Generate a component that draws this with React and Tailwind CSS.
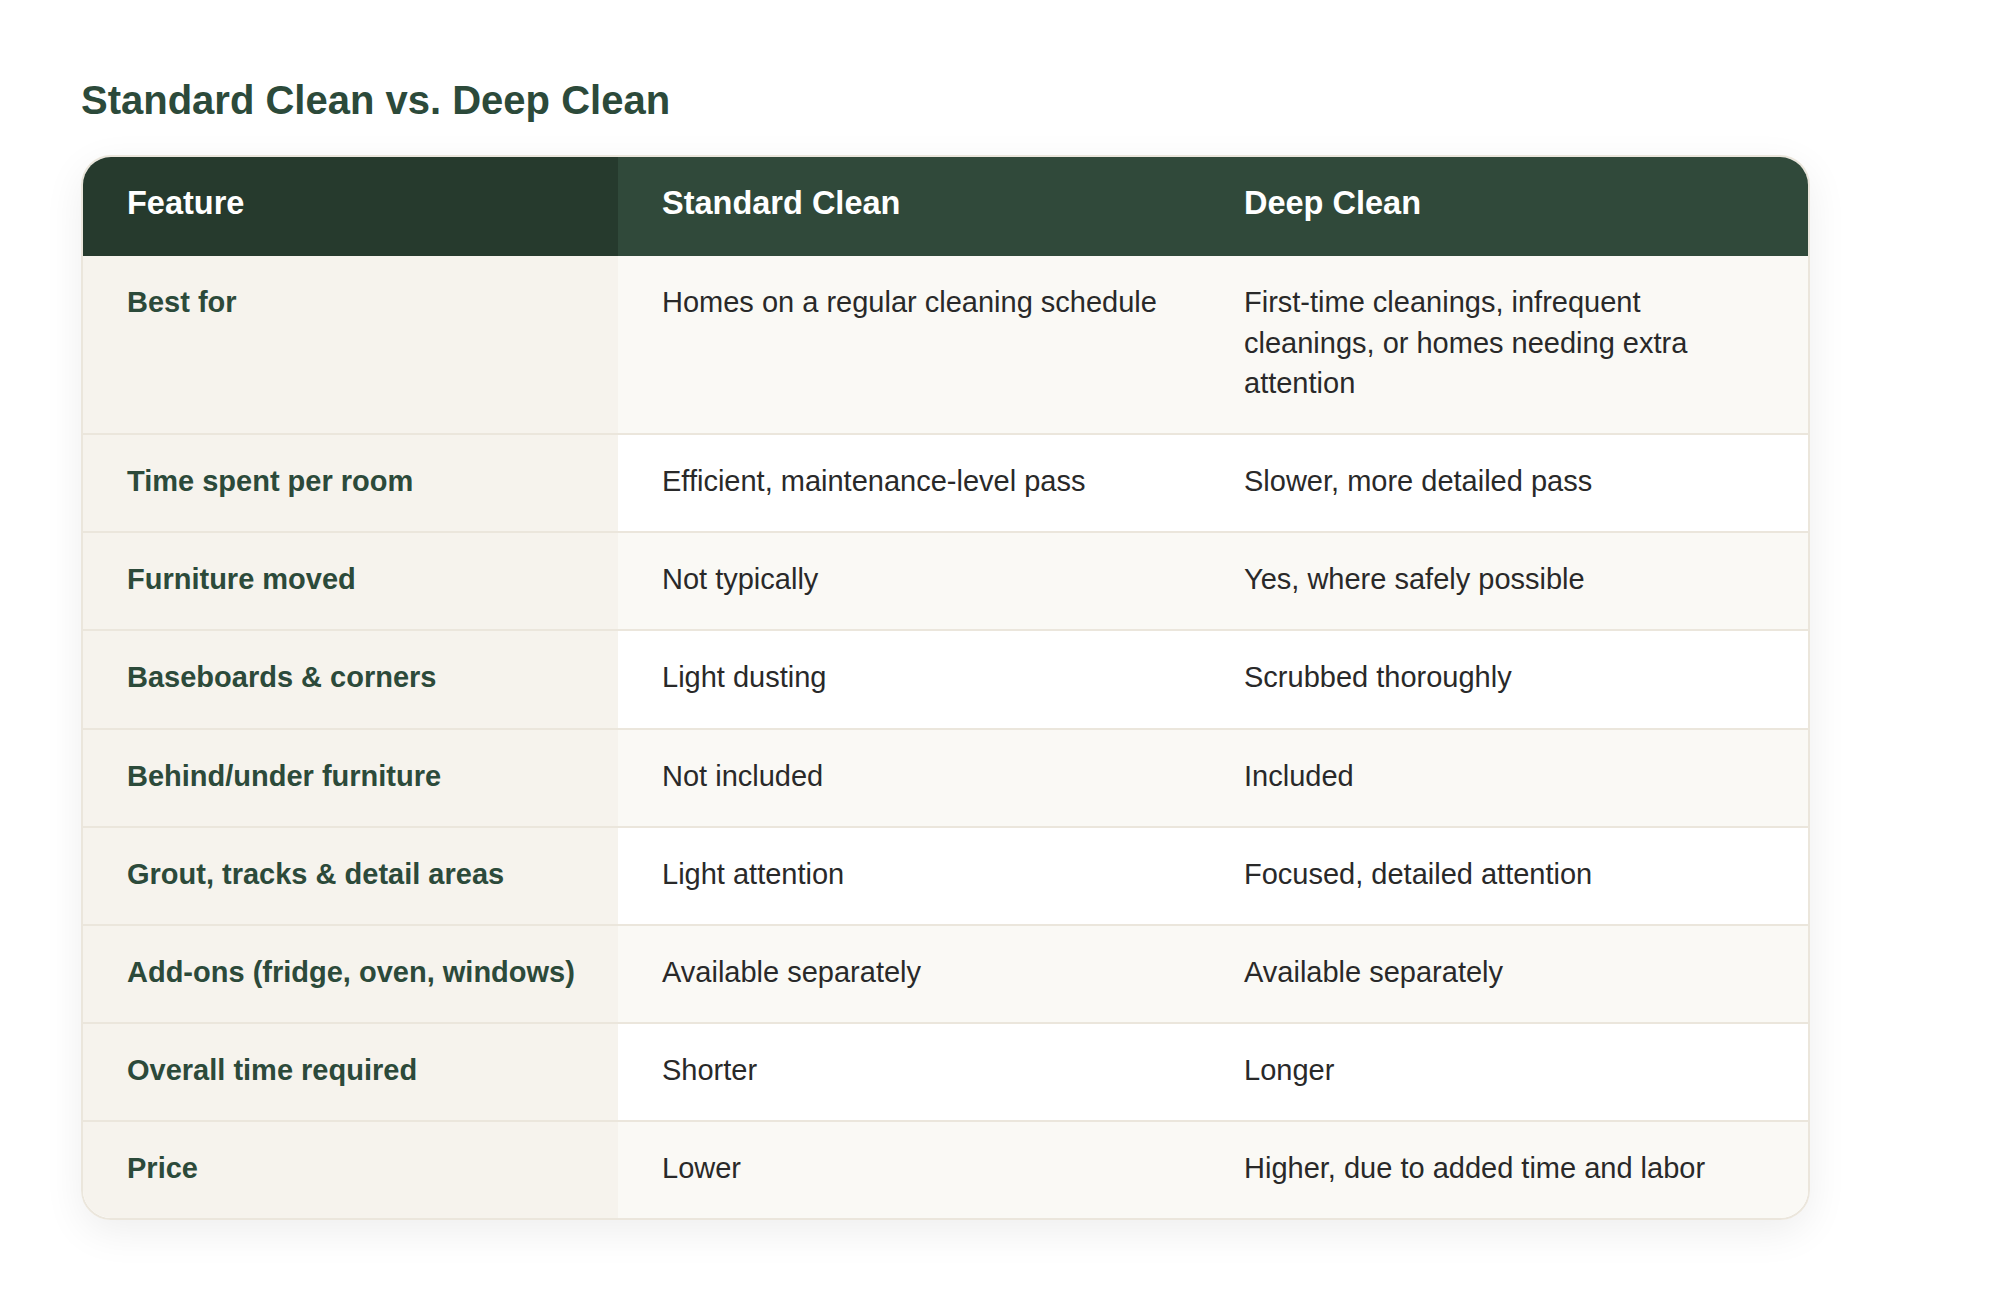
import React from "react";

const rows = [
  ["Best for", "Homes on a regular cleaning schedule", "First-time cleanings, infrequent cleanings, or homes needing extra attention"],
  ["Time spent per room", "Efficient, maintenance-level pass", "Slower, more detailed pass"],
  ["Furniture moved", "Not typically", "Yes, where safely possible"],
  ["Baseboards & corners", "Light dusting", "Scrubbed thoroughly"],
  ["Behind/under furniture", "Not included", "Included"],
  ["Grout, tracks & detail areas", "Light attention", "Focused, detailed attention"],
  ["Add-ons (fridge, oven, windows)", "Available separately", "Available separately"],
  ["Overall time required", "Shorter", "Longer"],
  ["Price", "Lower", "Higher, due to added time and labor"],
];

export default function App() {
  return (
    <div className="min-h-screen bg-white font-['Liberation_Sans',Arial,sans-serif] pt-[77px] pl-[81px]">
      <h1 className="text-[40px] leading-[47px] font-bold text-[#2c4a3a] mb-[31px]">
        Standard Clean vs. Deep Clean
      </h1>
      <div className="w-[1729px] border-2 border-[#ebe6dc] rounded-[30px] overflow-hidden shadow-[0_12px_40px_rgba(0,0,0,0.07)]">
        <table className="w-full table-fixed border-collapse">
          <colgroup>
            <col className="w-[535px]" />
            <col className="w-[582px]" />
            <col className="w-[608px]" />
          </colgroup>
          <thead>
            <tr>
              <th className="bg-[#263a2d] text-left text-white font-bold text-[32.5px] leading-[45px] pl-[44px] pr-[20px] pt-[24px] pb-[30px]">
                Feature
              </th>
              <th className="bg-[#30493a] text-left text-white font-bold text-[32.5px] leading-[45px] pl-[44px] pr-[20px] pt-[24px] pb-[30px]">
                Standard Clean
              </th>
              <th className="bg-[#30493a] text-left text-white font-bold text-[32.5px] leading-[45px] pl-[44px] pr-[20px] pt-[24px] pb-[30px]">
                Deep Clean
              </th>
            </tr>
          </thead>
          <tbody>
            {rows.map((r, i) => {
              const last = i === rows.length - 1;
              const light = i % 2 === 0;
              const border = last ? "" : "border-b-2 border-[#ebe6dc]";
              const cellBg = light ? "bg-[#faf9f5]" : "bg-white";
              return (
                <tr key={i}>
                  <td className={`${border} bg-[#f6f3ed] align-top text-left text-[29px] leading-[40.6px] font-bold text-[#2c4a3a] pl-[44px] pr-[20px] pt-[26px] pb-[29.5px]`}>
                    {r[0]}
                  </td>
                  <td className={`${border} ${cellBg} align-top text-left text-[29px] leading-[40.6px] text-[#292929] pl-[44px] pr-[20px] pt-[26px] pb-[29.5px]`}>
                    {r[1]}
                  </td>
                  <td className={`${border} ${cellBg} align-top text-left text-[29px] leading-[40.6px] text-[#292929] pl-[44px] pr-[45px] pt-[26px] pb-[29.5px]`}>
                    {r[2]}
                  </td>
                </tr>
              );
            })}
          </tbody>
        </table>
      </div>
    </div>
  );
}
